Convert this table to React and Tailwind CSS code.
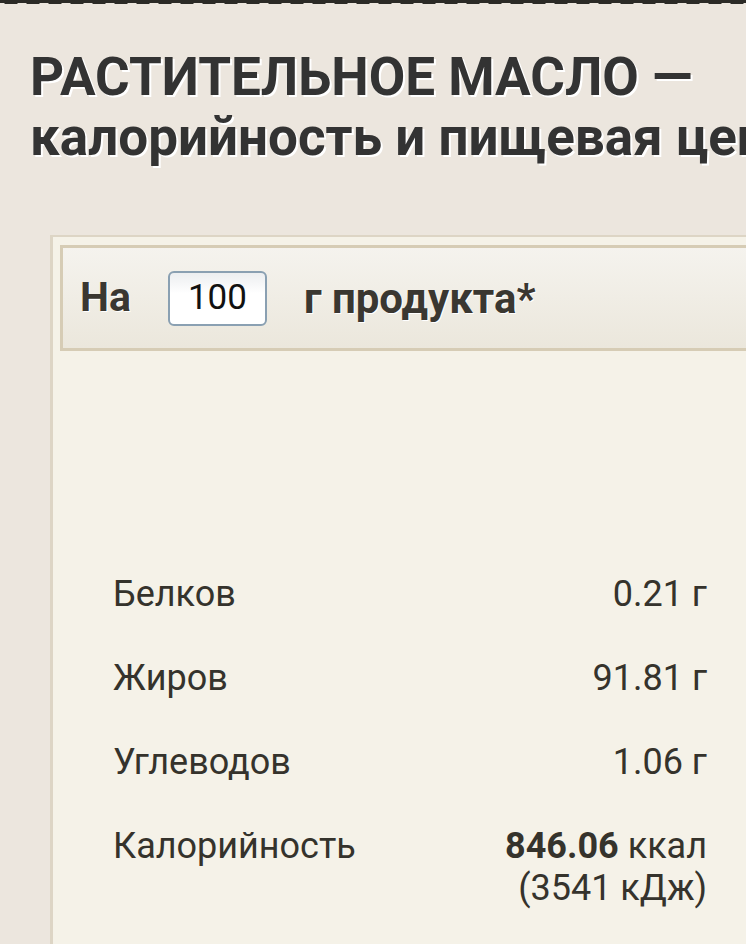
export default function App() {
  const rows = [
    ["Белков", <>0.21 г</>],
    ["Жиров", <>91.81 г</>],
    ["Углеводов", <>1.06 г</>],
  ];
  return (
    <div className="w-[746px] h-[944px] overflow-hidden bg-[#ece6de] text-[#333] font-['Roboto',sans-serif]">
      <div className="h-[3px] bg-[#2b2a26]" />
      <div className="h-[1px] bg-[radial-gradient(ellipse_at_50%_0,#2b2a26_8px,transparent_9px)] bg-[length:22px_1px]" />
      <h1 className="mt-[43px] ml-[30px] whitespace-nowrap text-[53px] leading-[60px] font-bold text-[#333] [text-shadow:2px_2px_0_#fff]">
        РАСТИТЕЛЬНОЕ МАСЛО —<br />калорийность и пищевая ценность
      </h1>
      <div className="mt-[68px] ml-[50px] w-[760px] h-[720px] border-l-[3px] border-t-[2px] border-[#ddd5c5] bg-[#f5f2e8] pt-[8px] pl-[7px]">
        <div className="h-[106px] border-[3px] border-[#d6ccb5] bg-gradient-to-b from-[#f5f3ee] to-[#ebe7dc] flex items-center pl-[17px] text-[#3a3731]">
          <span className="text-[41px] font-bold [text-shadow:1px_1px_0_#fff]">На</span>
          <div className="ml-[37px] w-[99px] h-[55px] rounded-[6px] border-2 border-[#8aa0b2] bg-gradient-to-b from-[#eceef0] to-white to-40% flex items-center justify-center text-[35px] text-[#111]">
            100
          </div>
          <span className="ml-[37px] text-[42px] font-bold [text-shadow:1px_1px_0_#fff]">г продукта*</span>
        </div>
        <div className="mt-[222px] w-[594px] ml-[53px] text-[36px] leading-[42px] text-[#35332c]">
          {rows.map(([l, v]) => (
            <div key={l} className="flex justify-between mb-[42px]">
              <span>{l}</span>
              <span>{v}</span>
            </div>
          ))}
          <div className="flex justify-between">
            <span>Калорийность</span>
            <span className="text-right">
              <b className="font-bold">846.06</b> ккал<br />(3541 кДж)
            </span>
          </div>
        </div>
      </div>
    </div>
  );
}
